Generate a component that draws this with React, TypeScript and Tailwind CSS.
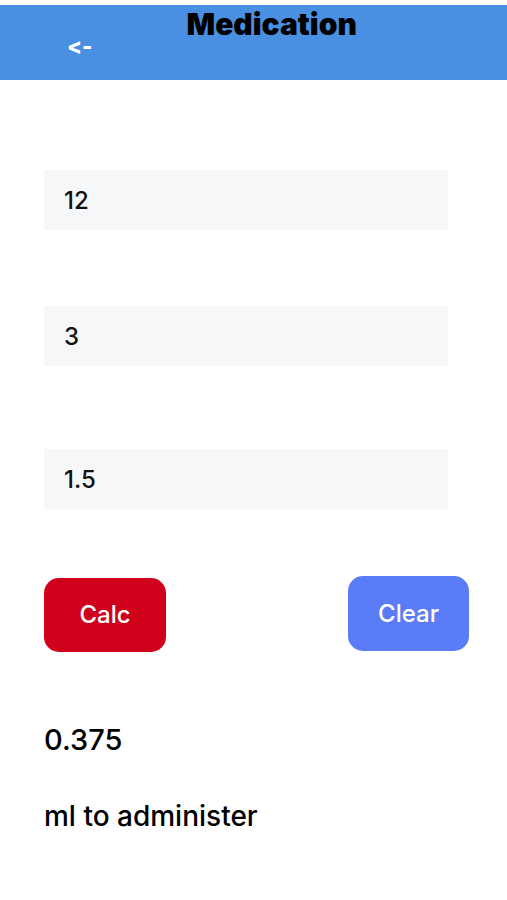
import React, { useState } from 'react';

const font = { fontFamily: 'Inter, "Noto Sans", sans-serif' };

const Field: React.FC<{ value: string; onChange: (v: string) => void; className?: string }> = ({ value, onChange, className }) => (
  <input
    value={value}
    onChange={(e) => onChange(e.target.value)}
    className={`block w-[404px] h-[60px] ml-[44px] bg-[#f6f7f9] pl-[20px] text-[24px] font-medium text-[#111] outline-none ${className || ''}`}
  />
);

export default function App() {
  const [dose, setDose] = useState('12');
  const [stock, setStock] = useState('3');
  const [vol, setVol] = useState('1.5');
  const [result, setResult] = useState('0.375');

  const calc = () => {
    const d = parseFloat(dose);
    const s = parseFloat(stock);
    const v = parseFloat(vol);
    if (!d || !s || !v) return;
    setResult(String((s / d) * v));
  };

  const clear = () => {
    setDose('');
    setStock('');
    setVol('');
    setResult('');
  };

  return (
    <div className="w-[507px] h-[900px] bg-white overflow-hidden" style={font}>
      {/* header */}
      <div className="mt-[5px] h-[75px] bg-[#4a90e2] flex items-start">
        <button className="ml-[67px] mt-[29px] text-white text-[22px] font-extrabold leading-[24px] [font-feature-settings:'calt'_0]">&lt;-</button>
        <h1 className="ml-[94px] mt-[1px] text-[30px] font-black text-black leading-[36px]">Medication</h1>
      </div>

      <Field value={dose} onChange={setDose} className="mt-[90px]" />
      <Field value={stock} onChange={setStock} className="mt-[76px]" />
      <Field value={vol} onChange={setVol} className="mt-[83px]" />

      <div className="flex justify-between items-start ml-[44px] w-[425px] mt-[67px]">
        <button onClick={calc} className="mt-[2px] w-[122px] h-[74px] rounded-[15px] bg-[#d0021b] text-white text-[24px] font-medium">
          Calc
        </button>
        <button onClick={clear} className="w-[121px] h-[75px] rounded-[15px] bg-[#5b7cf7] text-white text-[24px] font-medium">
          Clear
        </button>
      </div>

      <div className="ml-[44px] mt-[71px] text-[29px] leading-[34px] font-medium text-black">{result}</div>
      <div className="ml-[44px] mt-[42px] text-[28px] leading-[34px] font-medium text-black">ml to administer</div>
    </div>
  );
}
